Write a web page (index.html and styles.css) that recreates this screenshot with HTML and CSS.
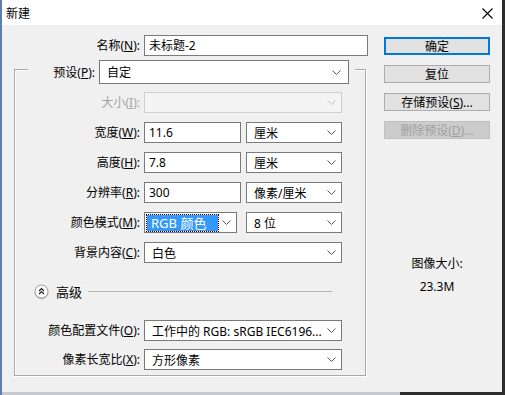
FILE: index.html
```html
<!DOCTYPE html>
<html lang="zh-CN">
<head>
<meta charset="UTF-8">
<title>新建</title>
<link rel="stylesheet" href="styles.css">
</head>
<body>
<div class="window">
    <div class="titlebar">
        <span class="title">新建</span>
        <svg class="close" width="11" height="11" viewBox="0 0 11 11"><path d="M0.5 0.5 L10.5 10.5 M10.5 0.5 L0.5 10.5" stroke="#000" stroke-width="1.1" fill="none"/></svg>
    </div>
    <div class="content">
        <div class="main">
            <div class="name-row">
                <label class="lbl">名称(<u>N</u>):</label>
                <div class="field name-field">未标题-2</div>
            </div>

            <div class="group">
                <div class="legend">
                    <label class="lbl preset-lbl">预设(<u>P</u>):</label>
                    <div class="combo preset"><span>自定</span><svg class="chev" width="9" height="5" viewBox="0 0 9 5"><polyline points="0.5,0.5 4.5,4.5 8.5,0.5" fill="none" stroke="#555"/></svg></div>
                </div>

                <div class="rows">
                    <label class="lbl disabled">大小(<u>I</u>):</label>
                    <div class="combo wide off"><span></span><svg class="chev" width="9" height="5" viewBox="0 0 9 5"><polyline points="0.5,0.5 4.5,4.5 8.5,0.5" fill="none" stroke="#c4c4c4"/></svg></div>

                    <label class="lbl">宽度(<u>W</u>):</label>
                    <div class="pair">
                        <div class="field num">11.6</div>
                        <div class="combo unit"><span>厘米</span><svg class="chev" width="9" height="5" viewBox="0 0 9 5"><polyline points="0.5,0.5 4.5,4.5 8.5,0.5" fill="none" stroke="#555"/></svg></div>
                    </div>

                    <label class="lbl">高度(<u>H</u>):</label>
                    <div class="pair">
                        <div class="field num">7.8</div>
                        <div class="combo unit"><span>厘米</span><svg class="chev" width="9" height="5" viewBox="0 0 9 5"><polyline points="0.5,0.5 4.5,4.5 8.5,0.5" fill="none" stroke="#555"/></svg></div>
                    </div>

                    <label class="lbl">分辨率(<u>R</u>):</label>
                    <div class="pair">
                        <div class="field num">300</div>
                        <div class="combo unit"><span>像素/厘米</span><svg class="chev" width="9" height="5" viewBox="0 0 9 5"><polyline points="0.5,0.5 4.5,4.5 8.5,0.5" fill="none" stroke="#555"/></svg></div>
                    </div>

                    <label class="lbl">颜色模式(<u>M</u>):</label>
                    <div class="pair">
                        <div class="combo mode"><span class="sel">RGB 颜色</span><svg class="chev" width="9" height="5" viewBox="0 0 9 5"><polyline points="0.5,0.5 4.5,4.5 8.5,0.5" fill="none" stroke="#555"/></svg></div>
                        <div class="combo unit bits"><span>8 位</span><svg class="chev" width="9" height="5" viewBox="0 0 9 5"><polyline points="0.5,0.5 4.5,4.5 8.5,0.5" fill="none" stroke="#555"/></svg></div>
                    </div>

                    <label class="lbl">背景内容(<u>C</u>):</label>
                    <div class="combo wide"><span>白色</span><svg class="chev" width="9" height="5" viewBox="0 0 9 5"><polyline points="0.5,0.5 4.5,4.5 8.5,0.5" fill="none" stroke="#555"/></svg></div>
                </div>

                <div class="advanced">
                    <svg class="adv-icon" width="15" height="15" viewBox="0 0 15 15">
                        <circle cx="7.5" cy="7.5" r="6.5" fill="#fff" stroke="#9c9c9c"/>
                        <polyline points="5,7 7.5,4.5 10,7" fill="none" stroke="#222" stroke-width="1.2"/>
                        <polyline points="5,10 7.5,7.5 10,10" fill="none" stroke="#222" stroke-width="1.2"/>
                    </svg>
                    <span class="adv-text">高级</span>
                    <span class="adv-line"></span>
                </div>

                <div class="rows adv-rows">
                    <label class="lbl">颜色配置文件(<u>O</u>):</label>
                    <div class="combo wide"><span>工作中的 RGB: sRGB IEC6196...</span><svg class="chev" width="9" height="5" viewBox="0 0 9 5"><polyline points="0.5,0.5 4.5,4.5 8.5,0.5" fill="none" stroke="#555"/></svg></div>

                    <label class="lbl">像素长宽比(<u>X</u>):</label>
                    <div class="combo wide"><span>方形像素</span><svg class="chev" width="9" height="5" viewBox="0 0 9 5"><polyline points="0.5,0.5 4.5,4.5 8.5,0.5" fill="none" stroke="#555"/></svg></div>
                </div>
            </div>
        </div>

        <div class="side">
            <button class="btn default">确定</button>
            <button class="btn">复位</button>
            <button class="btn">存储预设(<u>S</u>)...</button>
            <button class="btn" disabled>删除预设(<u>D</u>)...</button>

            <div class="info">
                <div class="info-label">图像大小:</div>
                <div class="info-value">23.3M</div>
            </div>
        </div>
    </div>
</div>
</body>
</html>
```

FILE: styles.css
```css
html {
    background: linear-gradient(to right, #c8c9d0 0, #c8c9d0 400px, #2d2d2d 400px);
}

body {
    margin: 0;
    padding: 0 3px 3px 2px;
    background: linear-gradient(#5b7eaa, #5b7eaa) 0 0 / 2px 100% no-repeat;
    font-family: "Noto Sans", "Noto Sans CJK SC", sans-serif;
    font-size: 12px;
    color: #000;
}

.window {
    width: 500px;
    height: 392px;
    background-color: #f0f0f0;
    overflow: hidden;
}

.titlebar {
    height: 25px;
    background-color: #fff;
    display: flex;
    align-items: center;
    justify-content: space-between;
    padding: 0 9px 0 4px;
}

.title {
    font-size: 12px;
}

.close {
    display: block;
    margin-top: 2px;
}

.content {
    display: flex;
}

.main {
    width: 354px;
    margin-left: 12px;
    padding-top: 10px;
}

.lbl {
    text-align: right;
    white-space: nowrap;
    line-height: 21px;
}

.lbl u {
    text-underline-offset: 1px;
}

.lbl.disabled {
    color: #a3a3a3;
}

.name-row {
    display: grid;
    grid-template-columns: 126px 224px;
    column-gap: 4px;
}

.field {
    height: 21px;
    box-sizing: border-box;
    border: 1px solid #7a7a7a;
    background-color: #fff;
    padding: 0 4px;
    line-height: 19px;
}

.combo {
    height: 21px;
    box-sizing: border-box;
    border: 1px solid #7a7a7a;
    background-color: #fff;
    display: flex;
    align-items: center;
    justify-content: space-between;
    padding: 0 5px 0 7px;
    white-space: nowrap;
}

.combo .chev {
    flex-shrink: 0;
    margin-left: 4px;
}

.group {
    width: 352px;
    box-sizing: border-box;
    margin-top: 13px;
    border: 1px solid #a9a9a9;
    box-shadow: 1px 1px 0 #fff, inset 1px 1px 0 #fff;
    padding-bottom: 5px;
}

.legend {
    display: flex;
    align-items: center;
    width: 327px;
    height: 24px;
    margin: -10px 0 0 13px;
    background-color: #f0f0f0;
}

.preset-lbl {
    width: 67px;
    margin-right: 4px;
}

.combo.preset {
    width: 250px;
    height: 24px;
    padding-right: 7px;
}

.rows {
    display: grid;
    grid-template-columns: 125px 198px;
    column-gap: 4px;
    row-gap: 9px;
    margin-top: 8px;
}

.combo.wide {
    width: 198px;
}

.combo.off {
    background-color: #f4f4f4;
    border-color: #cfcfcf;
}

.pair {
    display: flex;
    justify-content: space-between;
}

.field.num {
    width: 97px;
}

.combo.unit {
    width: 96px;
}

.combo.mode {
    width: 93px;
    padding-left: 2px;
}

.sel {
    background-color: #3399ff;
    color: #fff;
    font-size: 13px;
    line-height: 16px;
    width: 67px;
    padding-left: 4px;
    outline: 1px dotted #000;
}

.advanced {
    display: flex;
    align-items: center;
    height: 15px;
    margin: 21px 33px 0 19px;
}

.adv-icon {
    display: block;
    filter: drop-shadow(0 1px 0 #c8c8c8);
}

.adv-text {
    margin-left: 7px;
    font-size: 13px;
}

.adv-line {
    flex: 1;
    height: 1px;
    margin-left: 6px;
    background-color: #b5b5b5;
}

.adv-rows {
    margin-top: 21px;
    row-gap: 8px;
}

.side {
    width: 106px;
    margin-left: 16px;
    padding-top: 12px;
    display: flex;
    flex-direction: column;
    gap: 10px;
}

.btn {
    height: 18px;
    box-sizing: border-box;
    padding: 0;
    border: 1px solid #adadad;
    background-color: #e1e1e1;
    font-family: inherit;
    font-size: 12px;
    line-height: 15px;
    color: #000;
}

.btn.default {
    border: 2px solid #0078d7;
    line-height: 13px;
}

.btn:disabled {
    background-color: #cccccc;
    border-color: #bfbfbf;
    color: #a0a0a0;
}

.info {
    margin-top: 105px;
    text-align: center;
}

.info-value {
    margin-top: 6px;
}
```
